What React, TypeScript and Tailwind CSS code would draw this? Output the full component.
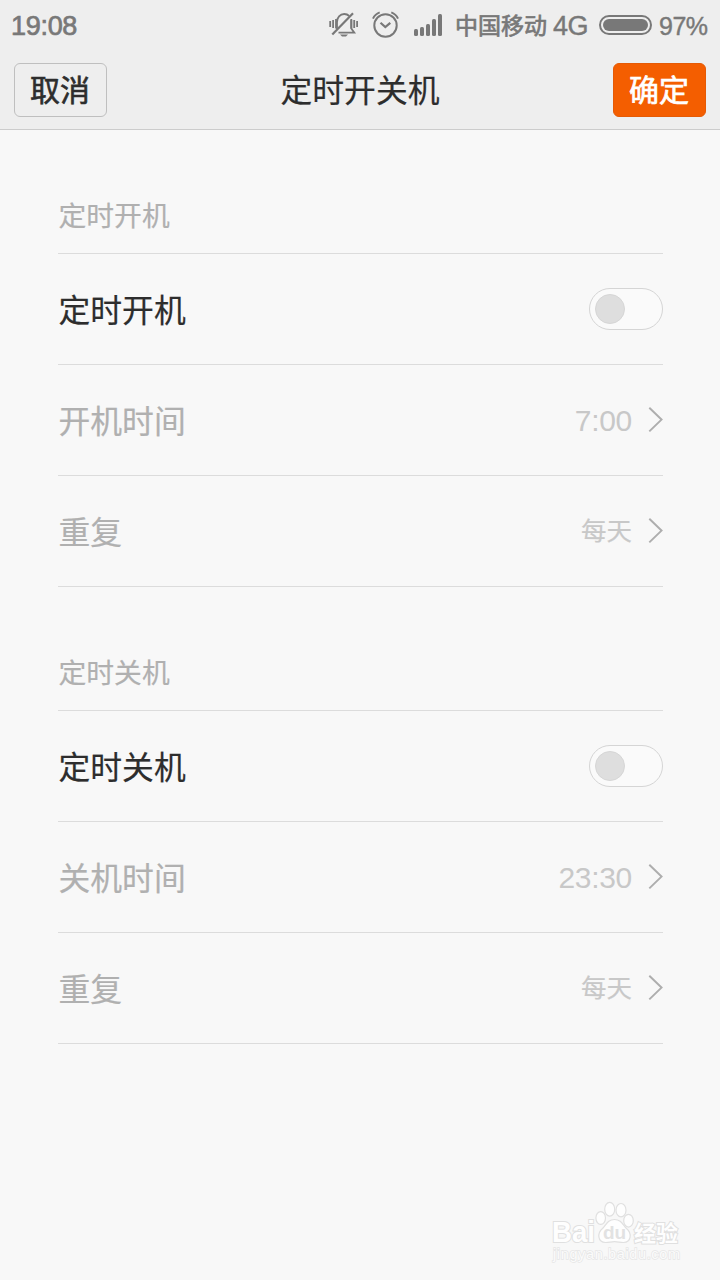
import React, { useState } from 'react';

interface ToggleProps {
  checked: boolean;
  onChange: (checked: boolean) => void;
}

interface ScheduleSectionProps {
  title: string;
  timeLabel: string;
  time: string;
  repeat: string;
}

const Toggle: React.FC<ToggleProps> = ({ checked, onChange }) => (
  <button
    type="button"
    role="switch"
    aria-checked={checked}
    onClick={() => onChange(!checked)}
    className={`flex items-center w-[74px] h-[42px] px-[5px] mb-px rounded-full border border-[#d5d5d5] ${
      checked ? 'justify-end bg-[#f56000]' : 'bg-[#fafafa]'
    }`}
  >
    <span className="w-[30px] h-[30px] rounded-full bg-[#dedede] border border-[#d6d6d6]" />
  </button>
);

const Chevron = () => (
  <svg className="w-[15px] h-[26px] ml-4 mb-px" viewBox="0 0 15 26" fill="none" stroke="#aeaeae" strokeWidth="2">
    <path d="M1.3 0.8 13.5 12.6 1.3 24.4" />
  </svg>
);

const ScheduleSection: React.FC<ScheduleSectionProps> = ({ title, timeLabel, time, repeat }) => {
  const [enabled, setEnabled] = useState(false);

  return (
    <section className="px-[58px] mr-[-1px]">
      <h2 className="h-[124px] pt-[67px] pl-[0.5px] text-[27.8px] leading-[40px] text-[#b0b0b0] border-b border-[#dcdcdc] [-webkit-text-stroke:0.2px_#b0b0b0]">
        {title}
      </h2>
      <div className="h-[111px] flex items-center justify-between border-b border-[#dcdcdc]">
        <span className="pt-1.5 pl-[0.5px] text-[31.8px] text-[#2d2d2d] [-webkit-text-stroke:0.2px_#2d2d2d]">{title}</span>
        <Toggle checked={enabled} onChange={setEnabled} />
      </div>
      <div className="h-[111px] flex items-center border-b border-[#dcdcdc]">
        <span className="flex-1 pt-1.5 pl-[0.5px] text-[31.8px] text-[#b0b0b0] [-webkit-text-stroke:0.2px_#b0b0b0]">{timeLabel}</span>
        <span className="text-[30px] leading-none pt-px tracking-[-0.3px] text-[#c8c8c8]">{time}</span>
        <Chevron />
      </div>
      <div className="h-[111px] flex items-center border-b border-[#dcdcdc]">
        <span className="flex-1 pt-1.5 pl-[0.5px] text-[31.8px] text-[#b0b0b0] [-webkit-text-stroke:0.2px_#b0b0b0]">{repeat}</span>
        <span className="pt-px text-[25.5px] text-[#c8c8c8] [-webkit-text-stroke:0.2px_#c8c8c8]">每天</span>
        <Chevron />
      </div>
    </section>
  );
};

const MutedBell = () => (
  <svg className="w-[30px] h-[28px]" viewBox="0 0 30 28" fill="none" stroke="#787878" strokeWidth="1.8">
    <path d="M8 18.5V11c0-4.5 3-8 7.2-8 2 0 3.8.8 5 2" />
    <path d="M22.3 9v8.5l3 4.2H9.5" />
    <path d="M24 2.3 3.3 23.5" strokeWidth="2.2" />
    <path d="M11 23.6h8l-2 1.8h-4z" fill="#787878" stroke="none" />
    <path d="M1.2 10v6M4.1 9v8M7 8v9.5M22.3 8v9.500M25.2 9v8M28.1 10v6" strokeWidth="1.8" />
  </svg>
);

const AlarmIcon = () => (
  <svg className="w-[28px] h-[28px]" viewBox="0 0 28 28" fill="none" stroke="#787878" strokeWidth="2">
    <circle cx="13.5" cy="14.5" r="11.2" />
    <path d="m8.5 11.8 4.800 4.300 5-4.300" strokeWidth="2.2" />
    <path d="M1 7.7C2.2 4.900 4.300 2.700 7.700 1.400M26 7.700c-1.200-2.800-3.300-5-6.700-6.300" />
  </svg>
);

const SignalIcon = () => (
  <svg className="w-[28px] h-[22px]" viewBox="0 0 28 22" fill="#787878">
    <rect x="0" y="15" width="4" height="7" rx="1.5" />
    <rect x="6" y="13" width="4" height="9" rx="1.5" />
    <rect x="12" y="10" width="4" height="12" rx="1.5" />
    <rect x="18" y="5" width="4" height="17" rx="1.5" />
    <rect x="24" y="0" width="4" height="22" rx="1.5" />
  </svg>
);

const StatusBar = () => (
  <div className="h-[50px] flex items-center pl-[11px] pr-3 text-[#787878]">
    <span className="pt-[3px] text-[27px] leading-none tracking-[-0.3px] [-webkit-text-stroke:0.7px_#787878]">19:08</span>
    <div className="ml-auto flex items-center">
      <MutedBell />
      <div className="ml-[13px]">
        <AlarmIcon />
      </div>
      <div className="ml-[14px]">
        <SignalIcon />
      </div>
      <span className="w-[92px] ml-[13px] pt-[3px] text-[23px] leading-none whitespace-nowrap [-webkit-text-stroke:0.7px_#787878]">
        中国移动
      </span>
      <span className="w-[36px] ml-[6px] pt-[2px] text-[27px] leading-none tracking-[-0.5px] [-webkit-text-stroke:0.4px_#787878]">
        4G
      </span>
      <div className="w-[53px] h-[20px] ml-[10px] p-[2px] rounded-full border-2 border-[#787878]">
        <div className="h-full rounded-full bg-[#787878]" />
      </div>
      <span className="w-[49px] ml-[7px] pt-[2px] text-[25px] leading-none tracking-[-0.5px] whitespace-nowrap [-webkit-text-stroke:0.4px_#787878]">
        97%
      </span>
    </div>
  </div>
);

// Corner logo, white with a faint outline
const Watermark = () => (
  <svg
    className="absolute left-[548px] top-[1198px] w-[140px] h-[70px]"
    viewBox="0 0 140 70"
    fill="#fefefe"
    stroke="#e0e0e0"
    strokeWidth="1.2"
    fontFamily="Liberation Sans, Noto Sans CJK SC, sans-serif"
  >
    <ellipse cx="52.7" cy="20" rx="4.8" ry="6.4" />
    <ellipse cx="61.7" cy="11.2" rx="5" ry="6.9" />
    <ellipse cx="73" cy="12.2" rx="5" ry="6.7" />
    <ellipse cx="80.5" cy="22.7" rx="4.8" ry="6.4" />
    <path d="M66.5 21.5c-7 0-8 5-12 9-5.5 4.5-5 14 3 14 4 0 5-.8 9-.8s5 .8 9 .8c8 0 8.5-9.5 3-14-4-4-5-9-12-9z" />
    <g fontWeight="bold" strokeWidth="2" paintOrder="stroke">
      <text x="4" y="43.5" fontSize="29" textLength="43" lengthAdjust="spacingAndGlyphs">Bai</text>
      <text x="55" y="41" fontSize="19" textLength="23" fill="#e2e2e2" stroke="none">du</text>
      <text x="86" y="42.5" fontSize="22" textLength="44">经验</text>
    </g>
    <text x="5" y="61" fontSize="14.5" textLength="127" fill="#fbfbfb" strokeWidth="1.4" stroke="#e6e6e6" paintOrder="stroke">
      jingyan.baidu.com
    </text>
  </svg>
);

const App = () => {
  return (
    <div className="relative w-[720px] h-[1280px] overflow-hidden bg-[#f8f8f8] font-['Liberation_Sans','Noto_Sans_CJK_SC',sans-serif]">
      {/* Header */}
      <header className="h-[130px] bg-[#eeeeee] border-b border-[#cccccc]">
        <StatusBar />
        <div className="h-[80px] flex items-center justify-between px-[14px]">
          <button className="w-[93px] h-[54px] pr-px pt-px rounded-md border-[1.5px] border-[#bfbfbf] text-[30px] leading-none text-[#2d2d2d] [-webkit-text-stroke:0.6px_#2d2d2d]">
            取消
          </button>
          <h1 className="pt-1 text-[31.8px] leading-none text-[#2d2d2d] [-webkit-text-stroke:0.2px_#2d2d2d]">定时开关机</h1>
          <button className="w-[93px] h-[54px] pr-px pt-px rounded-md border border-[#e55a05] bg-[#f45e00] text-[30px] leading-none text-white [-webkit-text-stroke:0.7px_#ffffff]">
            确定
          </button>
        </div>
      </header>

      {/* Schedules */}
      <main>
        <ScheduleSection title="定时开机" timeLabel="开机时间" time="7:00" repeat="重复" />
        <ScheduleSection title="定时关机" timeLabel="关机时间" time="23:30" repeat="重复" />
      </main>

      <Watermark />
    </div>
  );
};

export default App;
